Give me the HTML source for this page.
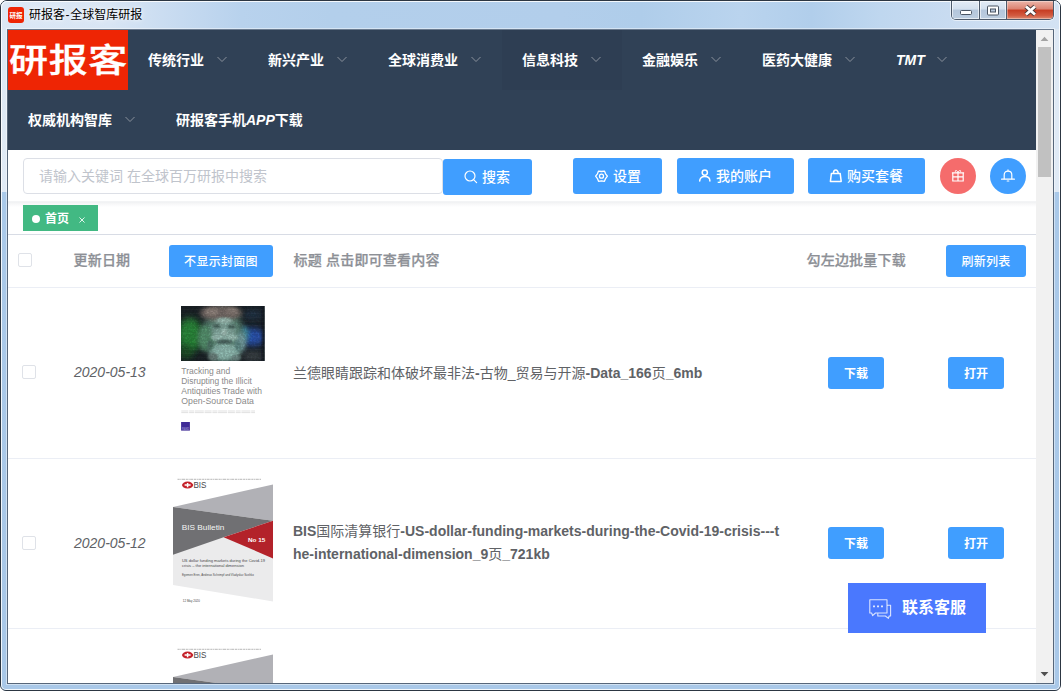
<!DOCTYPE html>
<html lang="zh-CN">
<head>
<meta charset="utf-8">
<title>研报客-全球智库研报</title>
<style>
*{box-sizing:border-box;margin:0;padding:0}
html,body{width:1061px;height:691px;overflow:hidden;background:#fff}
body{font-family:"Liberation Sans","Noto Sans CJK SC",sans-serif;font-size:14px;color:#606266;position:relative}
.abs{position:absolute}
svg{position:absolute;overflow:visible}
/* ---------- window frame ---------- */
#frame{position:absolute;left:0;top:0;width:1061px;height:691px;border-radius:7px 7px 6px 6px;overflow:hidden;
 background:#a9c8e8;border:1px solid #2c3642}
#glass{left:0;top:0;width:1059px;height:689px;
 background:linear-gradient(180deg,#dde8f4 0,#e0eaf5 191px,#aac9e9 191px,#a9c8e8 100%)}
#titlebar{left:0;top:0;width:1059px;height:28px;
 background:linear-gradient(90deg,#dce8f5 0,#d8e5f4 110px,#c6daf0 180px,#b8d2ed 240px,#b3cfeb 330px,#b2ceeb 560px,#afcdea 640px,#bad4ee 740px,#b1ceeb 810px,#bfd7ef 880px,#cadcf1 960px,#d3e2f3 1059px)}
#hl{left:0;top:0;width:1059px;height:689px;border-radius:6px 6px 5px 5px;box-shadow:inset 0 0 0 1px rgba(255,255,255,.85)}
#titletext{left:28px;top:6px;font-size:12px;line-height:16px;color:#000;white-space:nowrap;
 text-shadow:0 0 6px rgba(255,255,255,.9),0 0 3px rgba(255,255,255,.8)}
#appicon{left:7px;top:6px;width:16px;height:16px;border-radius:3px;background:#ee2504;overflow:hidden}
#client{left:7px;top:29px;width:1045px;height:653px;background:#fff;overflow:hidden}
#cborder{left:6px;top:28px;width:1047px;height:655px;border:1px solid #56667a;border-top-color:#6a7a8e;box-shadow:0 0 0 1px rgba(255,255,255,.45)}
/* window buttons */
#wbtn{left:950px;top:0;width:103px;height:19px;border:1px solid #4d5a6b;border-top:0;border-radius:0 0 5px 5px;overflow:hidden;
 box-shadow:0 0 0 1px rgba(255,255,255,.55)}
#wbtn div{position:absolute;top:0;height:18px}
.wb{background:linear-gradient(180deg,#e3ecf6 0,#d3e0ee 45%,#b4c6db 50%,#bccde0 100%);box-shadow:inset 0 0 0 1px rgba(255,255,255,.6)}
#wclose{background:linear-gradient(180deg,#ebb5a9 0,#dc8270 45%,#c63c22 50%,#d25a40 80%,#dc8a70 100%);box-shadow:inset 0 0 0 1px rgba(255,255,255,.35)}
/* ---------- nav ---------- */
#nav{left:0;top:0;width:1028px;height:120px;background:#304156}
#hover{left:494px;top:0;width:120px;height:60px;background:#2e3e53}
#logo{left:0;top:0;width:120px;height:60px;background:#ee2504;color:#fff;font-size:39px;line-height:60px;text-align:center;white-space:nowrap;font-weight:500;letter-spacing:.6px;text-indent:0;padding-left:1px;-webkit-text-stroke:.4px #fff}
#logo span{display:inline-block;transform:translateY(1px) scale(1.0,.85);transform-origin:50% 50%}
.mi{position:absolute;height:60px;line-height:60px;font-size:14px;font-weight:bold;color:#fff;white-space:nowrap}
.mi i{font-style:italic}
/* scrollbar */
#sb{left:1028px;top:0;width:17px;height:653px;background:#f1f1f1}
#thumb{left:2px;top:17px;width:13px;height:130px;background:#c1c1c1}
/* ---------- search row ---------- */
#srow{left:0;top:120px;width:1028px;height:50px;background:#fff}
#tagrow{left:0;top:171px;width:1028px;height:34px;background:linear-gradient(180deg,#f7f8f9 0,#eff0f2 1px,#f4f5f6 2px,#fafafb 4px,#fff 6px);border-bottom:1px solid #d8dce5}
#input{left:15px;top:128px;width:420px;height:36px;border:1px solid #dcdfe6;border-radius:4px;background:#fff;color:#c0c4cc;font-size:14px;line-height:34px;padding-left:15px;white-space:nowrap}
.btn{position:absolute;background:#409eff;color:#fff;border-radius:3px;white-space:nowrap;font-size:14px;font-weight:500}
.btn span{position:absolute;top:0;line-height:inherit}
.sbtn{font-size:12px;font-weight:bold;text-align:center;height:32px;line-height:34px}
.tag{left:15px;top:175px;width:75px;height:26px;background:#42b983;color:#fff;font-size:12px;line-height:26px;font-weight:bold}
.hl{position:absolute;left:0;width:1028px;height:1px;background:#ebeef5}
.cb{position:absolute;width:14px;height:14px;border:1px solid #dfe2e8;border-radius:2px;background:#fff}
.th{position:absolute;font-size:14px;font-weight:500;color:#8d9096;white-space:nowrap;line-height:20px;letter-spacing:.2px;margin-left:.5px;-webkit-text-stroke:.25px #8d9096}
.date{position:absolute;font-size:14px;font-style:italic;color:#606266;line-height:20px;white-space:nowrap}
.title{position:absolute;font-size:14px;font-weight:bold;color:#606266;line-height:23px;white-space:nowrap}
.title b{font-weight:normal}
.circ{position:absolute;width:36px;height:36px;border-radius:50%}
.cover{position:absolute;left:165px;width:100px;height:141px}
</style>
</head>
<body>
<div id="frame">
 <div class="abs" id="glass"></div>
 <div class="abs" id="titlebar"></div>
 <div class="abs" id="hl"></div>
 <div class="abs" id="appicon"><svg width="16" height="16" viewBox="0 0 16 16"><text x="8" y="10.6" font-size="6.5" font-weight="bold" fill="#fff" text-anchor="middle" font-family="Liberation Sans, Noto Sans CJK SC, sans-serif">研报</text></svg></div>
 <div class="abs" id="titletext">研报客<span style="margin:0 .6px">-</span>全球智库研报</div>
 <div class="abs" id="wbtn">
  <div class="wb" style="left:0;width:27px"></div>
  <div class="wb" style="left:28px;width:26px"></div>
  <div id="wclose" style="left:55px;width:47px"></div>
  <div style="left:27px;width:1px;background:#4d5a6b"></div>
  <div style="left:54px;width:1px;background:#4d5a6b"></div>
  <svg width="101" height="18" viewBox="1 0 101 18" style="left:0;top:0">
   <rect x="9.5" y="9.5" width="11" height="4" rx="1" fill="#fff" stroke="#4a5563" stroke-width="1"/>
   <rect x="36.5" y="5" width="11" height="9" rx="1" fill="#fff" stroke="#4a5563" stroke-width="1"/>
   <rect x="39.5" y="8" width="5" height="3" fill="#b9c9dd" stroke="#4a5563" stroke-width="1"/>
   <path d="M75 5.5 L84 13.5 M84 5.5 L75 13.5" stroke="#4a3a3a" stroke-width="4.6" stroke-linecap="butt" fill="none"/>
   <path d="M75 5.5 L84 13.5 M84 5.5 L75 13.5" stroke="#fff" stroke-width="2.8" stroke-linecap="butt" fill="none"/>
  </svg>
 </div>
 <div class="abs" id="cborder"></div>
 <div class="abs" id="client">
  <div class="abs" id="srow"></div>
  <div class="abs" id="tagrow"></div>
  <div class="abs" id="nav">
   <div class="abs" id="hover"></div>
   <div class="abs" id="logo"><span>研报客</span></div>
   <div class="mi" style="left:140px;top:0">传统行业</div>
   <div class="mi" style="left:260px;top:0">新兴产业</div>
   <div class="mi" style="left:380px;top:0">全球消费业</div>
   <div class="mi" style="left:514px;top:0">信息科技</div>
   <div class="mi" style="left:634px;top:0">金融娱乐</div>
   <div class="mi" style="left:754px;top:0">医药大健康</div>
   <div class="mi" style="left:888px;top:0"><i>TMT</i></div>
   <div class="mi" style="left:20px;top:60px">权威机构智库</div>
   <div class="mi" style="left:168px;top:60px">研报客手机<i>APP</i>下载</div>
   <svg width="1028" height="120" viewBox="0 0 1028 120" style="left:0;top:0" fill="none" stroke="#8a919c" stroke-width="1">
    <path d="M209.5 27 l4.5 4.5 l4.5 -4.5"/>
    <path d="M329.5 27 l4.5 4.5 l4.5 -4.5"/>
    <path d="M463.5 27 l4.5 4.5 l4.5 -4.5"/>
    <path d="M583.5 27 l4.5 4.5 l4.5 -4.5"/>
    <path d="M703.5 27 l4.5 4.5 l4.5 -4.5"/>
    <path d="M837.5 27 l4.5 4.5 l4.5 -4.5"/>
    <path d="M929.5 27 l4.5 4.5 l4.5 -4.5"/>
    <path d="M117.5 87 l4.5 4.5 l4.5 -4.5"/>
   </svg>
  </div>
  <div class="abs" id="input">请输入关键词 在全球百万研报中搜索</div>
  <div class="btn" style="left:435px;top:129px;width:89px;height:36px;line-height:36px"><span style="left:39px">搜索</span>
   <svg width="14" height="14" viewBox="0 0 14 14" style="left:21px;top:11px" fill="none" stroke="#fff" stroke-width="1.2"><circle cx="6" cy="6" r="5"/><path d="M9.6 9.6 L12.6 12.6" stroke-linecap="round"/></svg></div>
  <div class="btn" style="left:565px;top:128px;width:89px;height:36px;line-height:36px"><span style="left:40px">设置</span>
   <svg width="13" height="13" viewBox="0 0 13 13" style="left:21.7px;top:11.5px" fill="none" stroke="#fff" stroke-width="1.3"><path d="M12.40 6.20 L10.57 8.55 L9.45 11.31 L6.50 10.90 L3.55 11.31 L2.43 8.55 L0.60 6.20 L2.43 3.85 L3.55 1.09 L6.50 1.50 L9.45 1.09 L10.57 3.85 Z" stroke-linejoin="round"/><circle cx="6.5" cy="6.2" r="2"/></svg></div>
  <div class="btn" style="left:669px;top:128px;width:117px;height:36px;line-height:36px"><span style="left:39px">我的账户</span>
   <svg width="14" height="14" viewBox="0 0 14 14" style="left:21px;top:11px" fill="none" stroke="#fff" stroke-width="1.5"><circle cx="6.8" cy="3.6" r="2.6"/><path d="M1.7 12 C1.7 9.2 3.6 7.6 6.8 7.6 C10 7.6 11.9 9.2 11.9 12" stroke-linecap="round"/></svg></div>
  <div class="btn" style="left:800px;top:128px;width:117px;height:36px;line-height:36px"><span style="left:39px">购买套餐</span>
   <svg width="14" height="14" viewBox="0 0 14 14" style="left:21px;top:11px" fill="none" stroke="#fff" stroke-width="1.5"><path d="M2.4 4.6 H11.2 L12.2 12.4 H1.4 Z" stroke-linejoin="round"/><path d="M4.4 4.6 C4.4 -.1 9.2 -.1 9.2 4.6"/></svg></div>
  <div class="circ" style="left:932px;top:128px;background:#f56c6c">
   <svg width="14" height="14" viewBox="0 0 14 14" style="left:11px;top:11px" fill="none" stroke="#fff" stroke-width="1.2"><path d="M.9 3.8 H13.1 M1.8 3.8 V12 H12.2 V3.8 M7 3 V12 M1.8 7.8 H12.2"/><path d="M7 3.4 C5.4 .2 3.2 1.6 5 3.4 M7 3.4 C8.6 .2 10.8 1.6 9 3.4" stroke-width="1"/></svg></div>
  <div class="circ" style="left:982px;top:128px;background:#409eff">
   <svg width="16" height="14" viewBox="0 0 16 14" style="left:10px;top:11px" fill="none" stroke="#fff" stroke-width="1.2"><path d="M1.6 10.2 H14.4" stroke-linecap="round"/><path d="M4.2 10.2 V5.8 C4.2 .8 11.8 .8 11.8 5.8 V10.2"/><path d="M7.2 12 H8.8" stroke-linecap="round"/><path d="M8 .9 V1.8" stroke-linecap="round"/></svg></div>
  <div class="abs tag"><span class="abs" style="left:9px;top:10px;width:8px;height:8px;border-radius:50%;background:#fff"></span><span class="abs" style="left:22px;top:1px">首页</span>
   <svg width="8" height="8" viewBox="0 0 8 8" style="left:55px;top:11px" stroke="#fff" stroke-opacity=".85" stroke-width="1" fill="none"><path d="M1.5 1.5 L6.5 6.5 M6.5 1.5 L1.5 6.5"/></svg></div>
  <div class="cb" style="left:10px;top:223px"></div>
  <div class="th" style="left:65px;top:220px">更新日期</div>
  <div class="btn sbtn" style="left:161px;top:215px;width:104px;font-weight:500;letter-spacing:.3px">不显示封面图</div>
  <div class="th" style="left:285px;top:220px">标题 点击即可查看内容</div>
  <div class="th" style="left:798px;top:220px">勾左边批量下载</div>
  <div class="btn sbtn" style="left:938px;top:215px;width:80px;font-weight:500;letter-spacing:.3px">刷新列表</div>
  <div class="hl" style="top:257px"></div>

  <svg id="covers" width="1028" height="653" viewBox="8 30 1028 653" style="left:0;top:0" font-family="Liberation Sans, sans-serif">
   <defs>
    <filter id="b1" x="-50%" y="-50%" width="200%" height="200%"><feGaussianBlur stdDeviation="1.2"/></filter>
    <filter id="b2" x="-50%" y="-50%" width="200%" height="200%"><feGaussianBlur stdDeviation="2"/></filter>
    <filter id="grain" x="0" y="0" width="100%" height="100%"><feTurbulence type="fractalNoise" baseFrequency=".55" numOctaves="2" seed="4"/><feColorMatrix type="matrix" values="0 0 0 0 0  0 0 0 0 0  0 0 0 0 0  1.6 1.6 1.6 0 -1.6"/></filter>
    <filter id="b3" x="-50%" y="-50%" width="200%" height="200%"><feGaussianBlur stdDeviation="3"/></filter>
    <filter id="b5" x="-50%" y="-50%" width="200%" height="200%"><feGaussianBlur stdDeviation="5"/></filter>
    <clipPath id="ph"><rect x="181" y="306" width="83.6" height="55"/></clipPath>
   </defs>
   <g clip-path="url(#ph)">
    <rect x="180" y="305" width="86" height="57" fill="#1b2227"/>
    <ellipse cx="190" cy="335" rx="12" ry="17" fill="#2a8a3a" filter="url(#b3)"/>
    <ellipse cx="186" cy="352" rx="7" ry="7" fill="#1d5227" filter="url(#b3)"/>
    <ellipse cx="253" cy="337" rx="12" ry="9" fill="#2955b4" filter="url(#b3)"/>
    <ellipse cx="244" cy="334" rx="5" ry="8" fill="#3b8aa6" filter="url(#b2)"/>
    <ellipse cx="253" cy="315" rx="10" ry="5" fill="#22364a" filter="url(#b3)"/>
    <ellipse cx="253" cy="356" rx="11" ry="5" fill="#3c4449" filter="url(#b3)"/>
    <rect x="262.5" y="305" width="3" height="57" fill="#181d22" filter="url(#b1)"/>
    <ellipse cx="223" cy="334" rx="20" ry="26" fill="#5c8877" filter="url(#b3)"/>
    <ellipse cx="205" cy="338" rx="7" ry="13" fill="#57946f" filter="url(#b2)"/>
    <ellipse cx="241" cy="342" rx="5" ry="10" fill="#78a3a6" filter="url(#b2)"/>
    <ellipse cx="221" cy="313" rx="21" ry="8" fill="#776c67" filter="url(#b2)"/>
    <ellipse cx="212" cy="312" rx="7" ry="4" fill="#8f827b" filter="url(#b1)"/>
    <ellipse cx="232" cy="311" rx="6" ry="3.5" fill="#8a7e78" filter="url(#b1)"/>
    <ellipse cx="224" cy="331" rx="12" ry="12" fill="#88aea4" filter="url(#b2)"/>
    <ellipse cx="225" cy="352" rx="15" ry="9" fill="#93bfb5" filter="url(#b2)"/>
    <ellipse cx="224" cy="320.5" rx="8" ry="2.6" fill="#a3c4ba" filter="url(#b1)"/>
    <ellipse cx="216.8" cy="326" rx="4" ry="1.8" fill="#415b55" filter="url(#b1)"/>
    <ellipse cx="231.5" cy="326.5" rx="4" ry="1.8" fill="#415b55" filter="url(#b1)"/>
    <ellipse cx="224.2" cy="332.5" rx="2.8" ry="3.4" fill="#abcac1" filter="url(#b1)"/>
    <ellipse cx="217" cy="337.5" rx="6" ry="2.8" fill="#a2c7bd" filter="url(#b1)"/>
    <ellipse cx="232" cy="337.5" rx="6" ry="2.8" fill="#a2c7bd" filter="url(#b1)"/>
    <ellipse cx="224.5" cy="341.8" rx="8" ry="1.8" fill="#3f5954" filter="url(#b1)"/>
    <ellipse cx="210" cy="345" rx="3" ry="5" fill="#4d7566" filter="url(#b1)"/>
    <ellipse cx="238" cy="346" rx="3" ry="5" fill="#5f8a86" filter="url(#b1)"/>
    <ellipse cx="213" cy="357" rx="5" ry="4" fill="#6a807b" filter="url(#b1)"/>
    <ellipse cx="236" cy="358" rx="5" ry="3" fill="#6f8a86" filter="url(#b1)"/>
    <g stroke="#fff" stroke-opacity=".06" stroke-width=".5"><path d="M181 309.5H265M181 313.5H265M181 317.5H265M181 321.5H265M181 325.5H265M181 329.5H265M181 333.5H265M181 337.5H265M181 341.5H265M181 345.5H265M181 349.5H265M181 353.5H265M181 357.5H265"/></g>
    <rect x="181" y="306" width="84" height="55" filter="url(#grain)" opacity=".16"/>
   </g>
   <g fill="#8a8a8a" font-size="9.6">
    <text x="181.3" y="374" textLength="49" lengthAdjust="spacingAndGlyphs">Tracking and</text>
    <text x="181.3" y="384" textLength="70.6" lengthAdjust="spacingAndGlyphs">Disrupting the Illicit</text>
    <text x="181.3" y="394" textLength="80.6" lengthAdjust="spacingAndGlyphs">Antiquities Trade with</text>
    <text x="181.3" y="404" textLength="72.6" lengthAdjust="spacingAndGlyphs">Open-Source Data</text>
   </g>
   <path d="M181.3 411 H255 M181.3 412.6 H255" stroke="#d9d9d9" stroke-width=".8" stroke-dasharray="7 .8 5 .7 9 .8"/>
   <rect x="181.1" y="422" width="8.8" height="8.6" fill="#3f2b96"/>
   <text x="181.9" y="429.6" font-size="2.6" font-weight="bold" fill="#8f86c9" textLength="7.2" lengthAdjust="spacingAndGlyphs">RAND</text>
   <g>
    <path d="M173 554 L223.6 536.5 L273 557.5 L273 601.5 L173 585 Z" fill="#ebebec"/>
    <path d="M173 507 L273 484.5 L273 520.8 Z" fill="#b1b1b6"/>
    <path d="M173 507 L273 520.8 L223.6 537.2 L173 554.8 Z" fill="#707073"/>
    <path d="M223.6 537.2 L273 520.8 L273 558.4 Z" fill="#b3222a"/>
    <path d="M177.5 479.3 H261" stroke="#9a9a9a" stroke-width=".7" stroke-dasharray="2.2 .6 1.2 .5 3 .7"/>
    <ellipse cx="187.6" cy="485.1" rx="5.6" ry="3.5" fill="#c5222b"/>
    <path d="M184.6 485.1 H190.6 M187.6 483 V487.2" stroke="#fff" stroke-width="1.5"/>
    <text x="193.4" y="488.2" font-size="8.8" fill="#47474a" textLength="13" lengthAdjust="spacingAndGlyphs">BIS</text>
    <text x="181.8" y="530.4" font-size="7.6" fill="#f4f4f4" textLength="42.6" lengthAdjust="spacingAndGlyphs">BIS Bulletin</text>
    <text x="248" y="542.4" font-size="6.2" font-weight="bold" fill="#fff" textLength="17.4" lengthAdjust="spacingAndGlyphs">No 15</text>
    <g fill="#4a4a4a" font-size="4.1">
     <text x="181.9" y="562" textLength="83" lengthAdjust="spacingAndGlyphs">US dollar funding markets during the Covid-19</text>
     <text x="181.9" y="566.9" textLength="62" lengthAdjust="spacingAndGlyphs">crisis – the international dimension</text>
     <text x="181.9" y="575.8" font-size="3.6" textLength="72" lengthAdjust="spacingAndGlyphs">Egemen Eren, Andreas Schrimpf and Vladyslav Sushko</text>
     <text x="182.8" y="602.3" font-size="3.3" fill="#444" textLength="17" lengthAdjust="spacingAndGlyphs">12 May 2020</text>
    </g>
   </g>
   <g transform="translate(0,170)">
    <path d="M173 554 L223.6 536.5 L273 557.5 L273 601.5 L173 585 Z" fill="#ebebec"/>
    <path d="M173 507 L273 484.5 L273 520.8 Z" fill="#b1b1b6"/>
    <path d="M173 507 L273 520.8 L223.6 537.2 L173 554.8 Z" fill="#707073"/>
    <path d="M223.6 537.2 L273 520.8 L273 558.4 Z" fill="#b3222a"/>
    <path d="M177.5 479.3 H261" stroke="#9a9a9a" stroke-width=".7" stroke-dasharray="2.2 .6 1.2 .5 3 .7"/>
    <ellipse cx="187.6" cy="485.1" rx="5.6" ry="3.5" fill="#c5222b"/>
    <path d="M184.6 485.1 H190.6 M187.6 483 V487.2" stroke="#fff" stroke-width="1.5"/>
    <text x="193.4" y="488.2" font-size="8.8" fill="#47474a" textLength="13" lengthAdjust="spacingAndGlyphs">BIS</text>
    <text x="181.8" y="530.4" font-size="7.6" fill="#f4f4f4" textLength="42.6" lengthAdjust="spacingAndGlyphs">BIS Bulletin</text>
    <text x="248" y="542.4" font-size="6.2" font-weight="bold" fill="#fff" textLength="17.4" lengthAdjust="spacingAndGlyphs">No 15</text>
    <g fill="#4a4a4a" font-size="4.1">
     <text x="181.9" y="562" textLength="83" lengthAdjust="spacingAndGlyphs">US dollar funding markets during the Covid-19</text>
     <text x="181.9" y="566.9" textLength="62" lengthAdjust="spacingAndGlyphs">crisis – the international dimension</text>
     <text x="181.9" y="575.8" font-size="3.6" textLength="72" lengthAdjust="spacingAndGlyphs">Egemen Eren, Andreas Schrimpf and Vladyslav Sushko</text>
     <text x="182.8" y="602.3" font-size="3.3" fill="#444" textLength="17" lengthAdjust="spacingAndGlyphs">12 May 2020</text>
    </g>
   </g>
  </svg>
  <!-- row 1 -->
  <div class="cb" style="left:14px;top:335px"></div>
  <div class="date" style="left:66px;top:332px">2020-05-13</div>
  <div class="title" style="left:285px;top:332px"><b>兰德眼睛跟踪和体破坏最非法</b>-<b>古物_贸易与开源</b>-Data_166<b>页</b>_6mb</div>
  <div class="btn sbtn" style="left:820px;top:327px;width:56px">下载</div>
  <div class="btn sbtn" style="left:940px;top:327px;width:56px">打开</div>
  <div class="hl" style="top:428px"></div>

  <!-- row 2 -->
  <div class="cb" style="left:14px;top:506px"></div>
  <div class="date" style="left:66px;top:503px">2020-05-12</div>
  <div class="title" style="left:285px;top:490px">BIS<b>国际清算银行</b>-US-dollar-funding-markets-during-the-Covid-19-crisis---t<br>he-international-dimension_9<b>页</b>_721kb</div>
  <div class="btn sbtn" style="left:820px;top:497px;width:56px">下载</div>
  <div class="btn sbtn" style="left:940px;top:497px;width:56px">打开</div>
  <div class="hl" style="top:598px"></div>


  <div class="abs" id="kf" style="left:840px;top:553px;width:138px;height:50px;background:#4a78fe;color:#fff;font-size:16px;font-weight:bold;line-height:50px;white-space:nowrap"><span class="abs" style="left:54px;top:0">联系客服</span>
   <svg width="24" height="22" viewBox="0 0 24 22" style="left:20px;top:15px" fill="none" stroke="rgba(255,255,255,.8)" stroke-width="1.1" stroke-linejoin="round"><path d="M1.8 1.8 H19 V15 H7.5 L4.6 17.6 L3.6 15 H1.8 Z"/><path d="M19 7.2 H22.6 V18 H21.2 L20.4 20.4 L17.4 18 H9.8 V15.2"/><path d="M5.2 8.4 H6.8 M9.2 8.4 H10.8 M13.2 8.4 H14.8" stroke-width="1.6" stroke="#fff"/></svg></div>
  <div class="abs" id="sb"><div class="abs" id="thumb"></div>
   <svg width="17" height="653" viewBox="0 0 17 653" style="left:0;top:0"><path d="M4.6 11 L8.5 6.8 L12.4 11 Z" fill="#a3a3a3"/><path d="M4.6 642 L8.5 646.2 L12.4 642 Z" fill="#505050"/></svg></div>
 </div>
</div>
</body>
</html>
